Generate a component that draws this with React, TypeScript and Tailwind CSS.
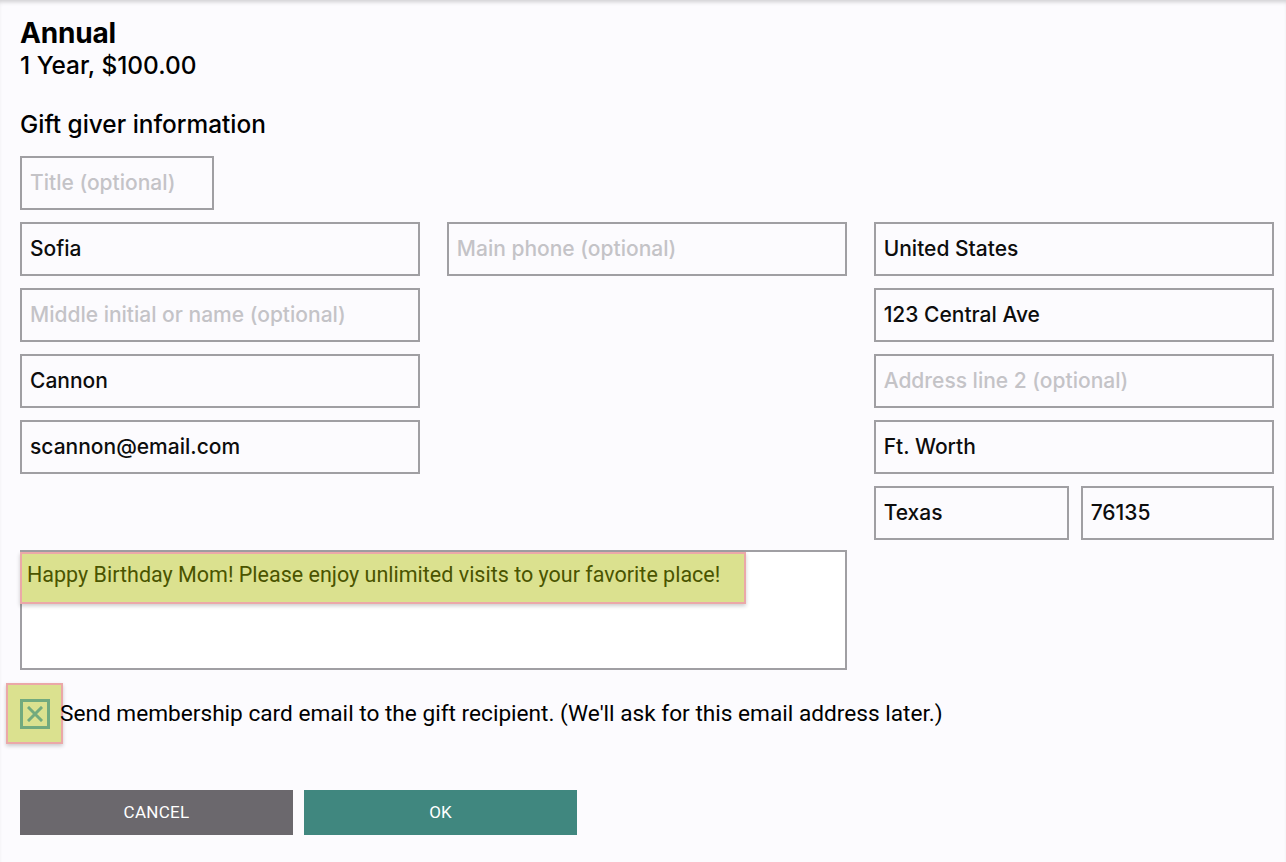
import React from "react";

const inputBase =
  "h-[54px] border-2 border-[#a09fa3] bg-transparent px-[8px] flex items-center text-[21px] font-medium text-black";

function Field({ value, placeholder, className = "" }: { value?: string; placeholder?: string; className?: string }) {
  return (
    <div className={`${inputBase} ${className}`} style={{ fontFamily: "Inter, 'Liberation Sans', sans-serif" }}>
      {value ? (
        <span className="text-[#0d0d0d]">{value}</span>
      ) : (
        <span className="text-[#c4c3c7]">{placeholder}</span>
      )}
    </div>
  );
}

export default function App() {
  return (
    <div
      className="w-[1286px] h-[862px] bg-[#fcfbfe] overflow-hidden shadow-[inset_0_4px_4px_-2px_rgba(0,0,0,0.18)]"
      style={{ fontFamily: "Inter, 'Liberation Sans', sans-serif" }}
    >
      <div className="pl-[20px] pt-[16px] flex flex-col">
        <div className="text-[28px] leading-[34px] font-bold text-black tracking-[-0.2px]">Annual</div>
        <div className="text-[24.4px] leading-[31px] font-medium text-black">1 Year, $100.00</div>
        <div className="mt-[27px] text-[24.4px] leading-[32px] font-medium text-black">Gift giver information</div>
        <div className="mt-[16px]">
          <Field placeholder="Title (optional)" className="w-[194px]" />
        </div>
        <div className="mt-[12px] w-[1254px] grid grid-cols-3 gap-x-[26.5px] gap-y-[12px]">
          <div className="flex flex-col gap-[12px]">
            <Field value="Sofia" />
            <Field placeholder="Middle initial or name (optional)" />
            <Field value="Cannon" />
            <Field value="scannon@email.com" />
          </div>
          <div className="flex flex-col gap-[12px]">
            <Field placeholder="Main phone (optional)" />
          </div>
          <div className="flex flex-col gap-[12px]">
            <Field value="United States" />
            <Field value="123 Central Ave" />
            <Field placeholder="Address line 2 (optional)" />
            <Field value="Ft. Worth" />
            <div className="flex gap-[12px]">
              <Field value="Texas" className="w-[195px]" />
              <Field value="76135" className="flex-1" />
            </div>
          </div>
        </div>
        <div className="mt-[10px] w-[827px] h-[120px] border-2 border-[#a09fa3] bg-white relative">
          <div
            className="absolute left-[-2px] top-0 w-[726px] h-[52px] bg-[#dbe18f] border-2 border-[#eba8a8] shadow-[0_2px_4px_rgba(0,0,0,0.2)] flex items-start pt-[7px] pl-[5px] text-[21.5px] leading-[28px] text-[#4a5400]"
            style={{ fontFamily: "Roboto, 'Liberation Sans', sans-serif" }}
          >
            Happy Birthday Mom! Please enjoy unlimited visits to your favorite place!
          </div>
        </div>
        <div className="mt-[13px] ml-[-14px] flex items-center h-[61px]">
          <div className="w-[57px] h-[61px] bg-[#dbe18f] border-2 border-[#eba8a8] shadow-[0_2px_4px_rgba(0,0,0,0.2)] flex items-center justify-center">
            <div className="w-[30px] h-[30px] border-[3px] border-[#72aa7e] flex items-center justify-center">
              <svg width="16" height="16" viewBox="0 0 16 16">
                <path d="M2 2 L14 14 M14 2 L2 14" stroke="#72aa7e" strokeWidth="3" strokeLinecap="square" />
              </svg>
            </div>
          </div>
          <div
            className="ml-[-3px] text-[22.65px] text-black"
            style={{ fontFamily: "Roboto, 'Liberation Sans', sans-serif" }}
          >
            Send membership card email to the gift recipient. (We'll ask for this email address later.)
          </div>
        </div>
        <div className="mt-[46px] flex gap-[11px]" style={{ fontFamily: "Roboto, 'Liberation Sans', sans-serif" }}>
          <div className="w-[273px] h-[45px] bg-[#6b686d] text-white text-[17px] flex items-center justify-center tracking-[0.3px]">
            CANCEL
          </div>
          <div className="w-[273px] h-[45px] bg-[#40877f] text-white text-[17px] flex items-center justify-center">
            OK
          </div>
        </div>
      </div>
    </div>
  );
}
